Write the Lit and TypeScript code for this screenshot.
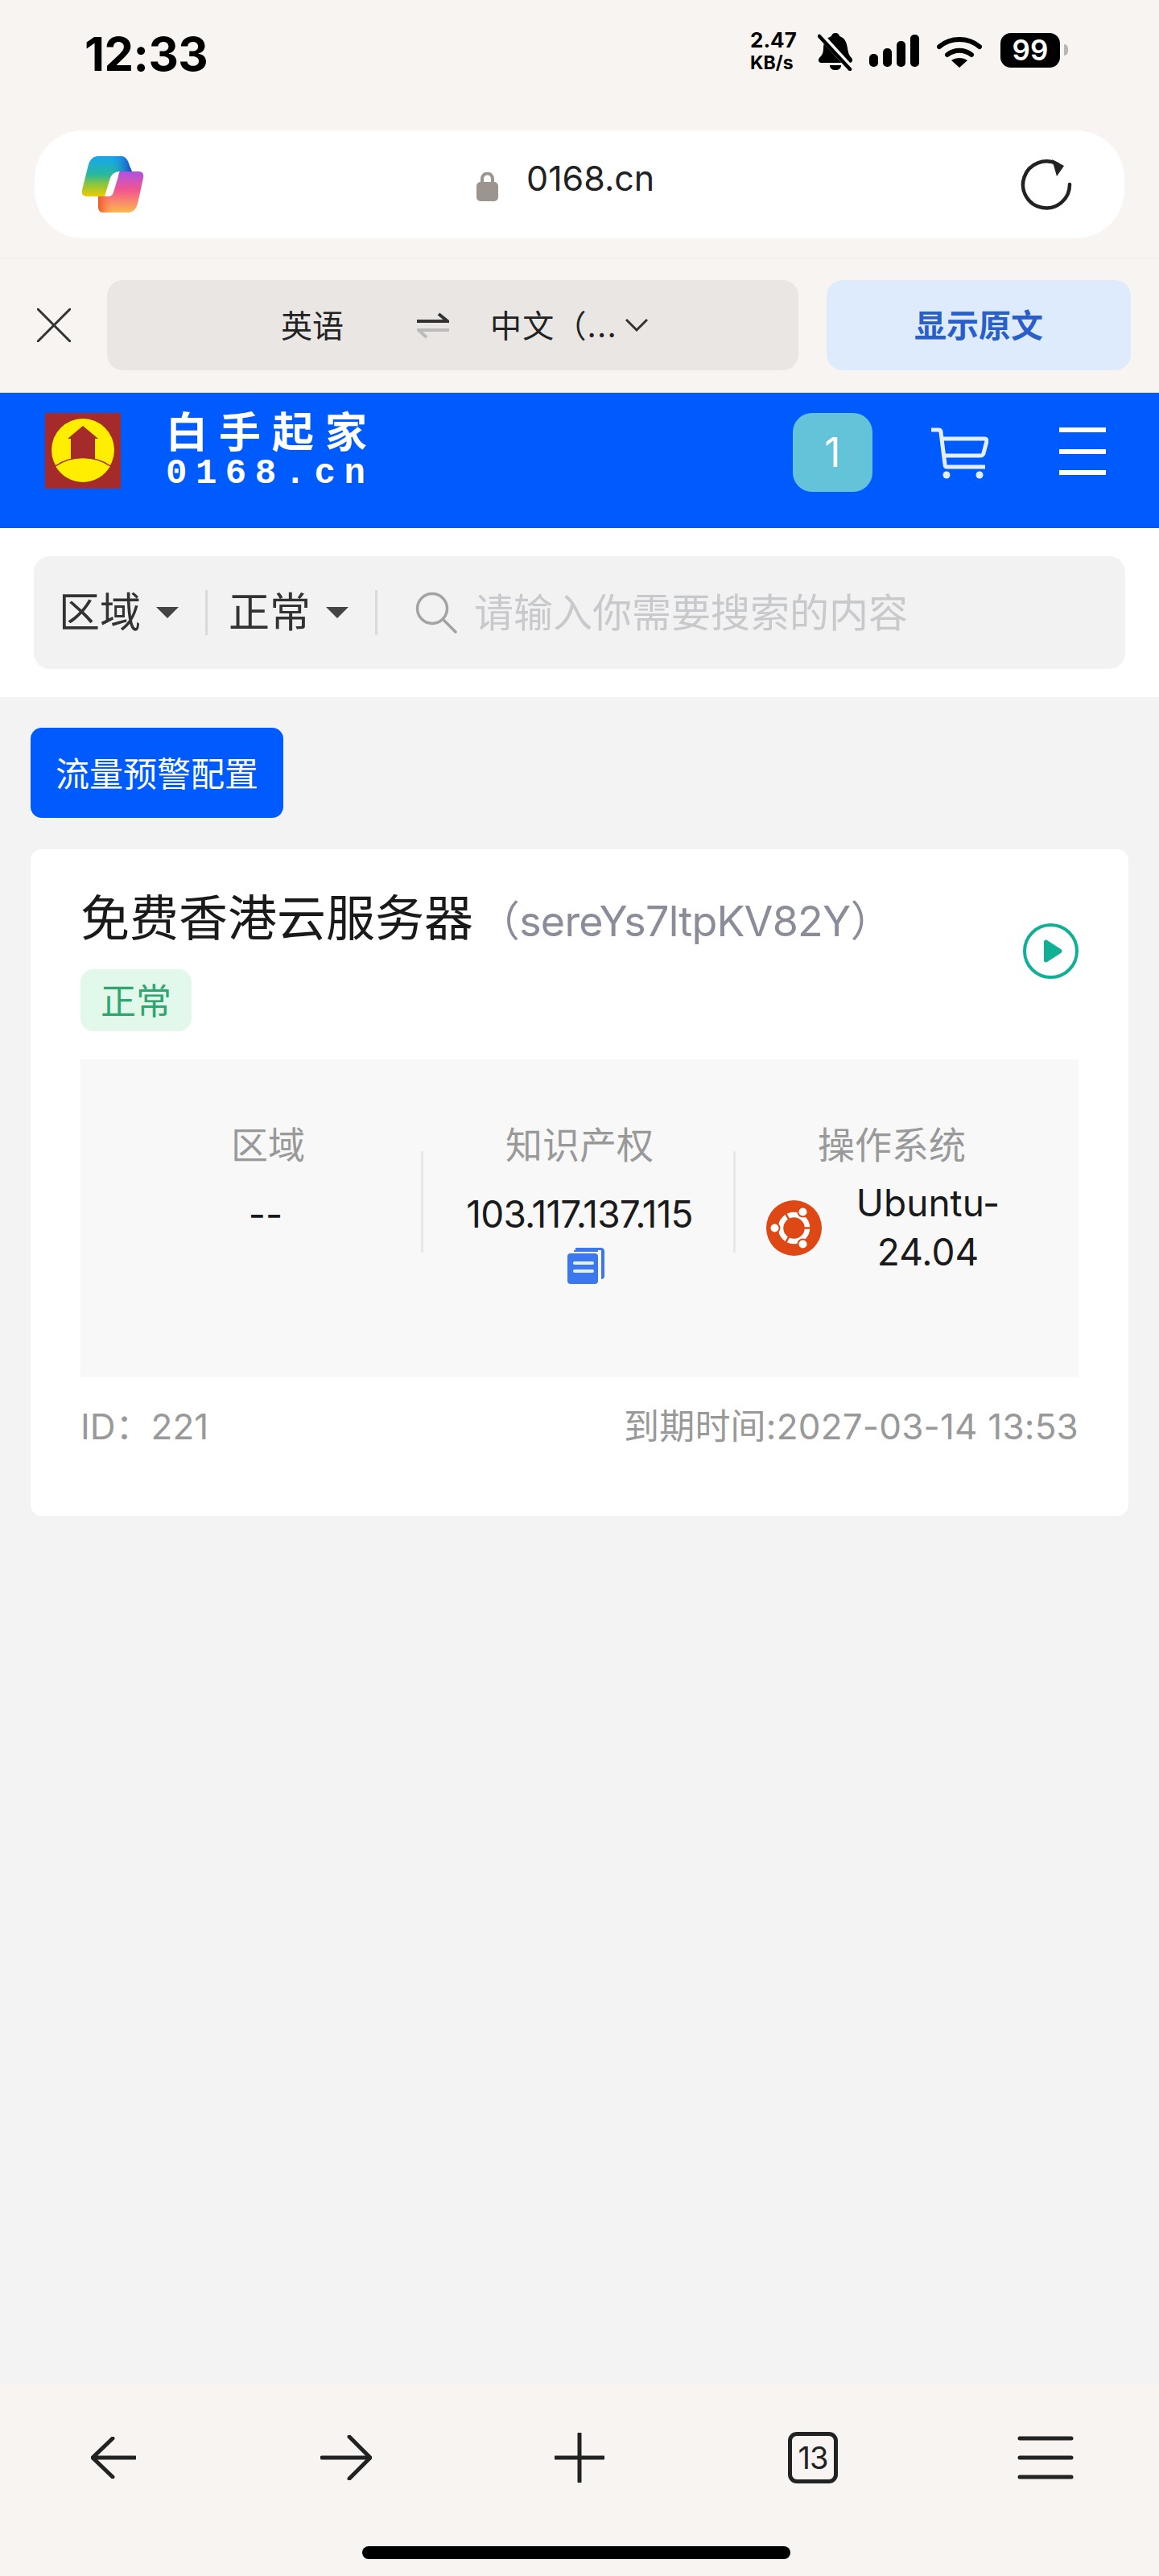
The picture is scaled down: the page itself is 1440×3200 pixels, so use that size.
import { LitElement, html, css } from 'lit';
import { customElement } from 'lit/decorators.js';

@customElement('app-root')
class AppRoot extends LitElement {
  static styles = css`
    :host {
      display: flex;
      flex-direction: column;
      width: 1440px;
      height: 3200px;
      background: #f3f3f3;
      font-family: Inter, 'Noto Sans CJK SC', sans-serif;
      color: #1a1a1a;
    }
    svg {
      display: block;
      flex: none;
    }
    .chrome {
      background: #f7f4f1;
      border-bottom: 1px solid #e2e0de;
    }
    .status {
      height: 162px;
      display: flex;
      align-items: flex-start;
      box-sizing: border-box;
      padding: 36px 0 0 105px;
    }
    .time {
      font-size: 58px;
      line-height: 62px;
      font-weight: 700;
      color: #000;
      letter-spacing: -0.5px;
    }
    .status-right {
      margin-left: auto;
      margin-top: 4px;
      display: flex;
      align-items: flex-start;
      padding-right: 113px;
    }
    .speed {
      width: 72px;
      margin-right: 12px;
      font-weight: 700;
      color: #000;
    }
    .speed div:first-child {
      font-size: 26px;
      line-height: 25px;
      margin-top: -3px;
    }
    .speed div:last-child {
      font-size: 23px;
      line-height: 25px;
      margin-top: 4px;
    }
    .signal {
      margin: 3px 0 0 20px;
    }
    .wifi {
      margin: 4px 0 0 22px;
    }
    .battery {
      width: 74px;
      height: 43px;
      margin-left: 23px;
      border-radius: 13px;
      background: #000;
      color: #fff;
      font-size: 35px;
      line-height: 43px;
      font-weight: 600;
      text-align: center;
      margin-top: 1px;
    }
    .nub {
      width: 5px;
      height: 14px;
      margin: 15px 0 0 5px;
      border-radius: 0 5px 5px 0;
      background: #b8b5b2;
    }
    .address {
      height: 134px;
      margin: 0 43px;
      background: #fff;
      border-radius: 60px;
      display: flex;
      align-items: center;
      padding: 0 65px 0 58px;
    }
    .url {
      margin-left: 413px;
      display: flex;
      align-items: center;
      font-size: 43px;
      color: #222;
    }
    .url svg {
      margin-right: 35px;
      margin-top: 6px;
    }
    .url span {
      margin-bottom: 16px;
    }
    .address .reload {
      margin-left: auto;
    }
    .translate {
      border-top: 1px solid #efecea;
      margin-top: 24px;
      display: flex;
      align-items: flex-start;
      padding: 27px 35px 27px 46px;
    }
    .translate .close {
      margin: 35px 45px 0 0;
    }
    .lang {
      width: 859px;
      height: 112px;
      border-radius: 20px;
      background: #e9e6e3;
      display: flex;
      align-items: center;
      box-sizing: border-box;
      padding-left: 216px;
      font-size: 39px;
      color: #222;
    }
    .lang span {
      margin-bottom: 4px;
    }
    .lang .target {
      letter-spacing: 1.2px;
    }
    .lang .swap {
      margin: 0 51px 0 91px;
    }
    .lang .chev {
      margin-left: 10px;
    }
    .original {
      margin-left: 35px;
      width: 378px;
      height: 112px;
      border-radius: 20px;
      background: #deebfd;
      color: #2a5fc9;
      font-size: 40px;
      font-weight: 700;
      display: flex;
      align-items: center;
      justify-content: center;
      padding-bottom: 4px;
      box-sizing: border-box;
    }
    .topbar {
      height: 168px;
      background: #005bff;
      display: flex;
      align-items: flex-start;
      color: #fff;
      padding: 25px 66px 0 56px;
      box-sizing: border-box;
    }
    .brand {
      margin-left: 56px;
    }
    .brand-cn {
      font-size: 52px;
      line-height: 50px;
      font-weight: 700;
      letter-spacing: 14px;
    }
    .brand-en {
      margin-top: 3px;
      font-family: 'Liberation Mono', monospace;
      font-size: 44px;
      line-height: 44px;
      font-weight: 700;
      letter-spacing: 10.5px;
    }
    .count {
      margin-left: auto;
      width: 99px;
      height: 98px;
      border-radius: 24px;
      background: #62c3d9;
      font-size: 50px;
      font-weight: 400;
      display: flex;
      align-items: center;
      justify-content: center;
    }
    .cart {
      margin: 18px 0 0 73px;
    }
    .burger {
      margin: 18px 0 0 88px;
    }
    .search-wrap {
      background: #fff;
      padding: 35px 42px;
    }
    .search {
      height: 140px;
      border-radius: 20px;
      background: #f2f2f2;
      display: flex;
      align-items: center;
      padding-left: 31px;
      font-size: 51px;
      color: #333;
    }
    .filter {
      display: flex;
      align-items: center;
    }
    .filter span {
      margin-bottom: 8px;
    }
    .caret {
      width: 0;
      height: 0;
      margin: 0 33px 0 19px;
      border-left: 14px solid transparent;
      border-right: 14px solid transparent;
      border-top: 14px solid #444;
    }
    .sep {
      width: 3px;
      height: 56px;
      background: #dadada;
      margin-right: 26px;
    }
    .search svg {
      margin: 0 21px 0 21px;
    }
    .placeholder {
      font-size: 49px;
      color: #c8c9cc;
      margin-bottom: 8px;
    }
    main {
      flex: 1;
      padding: 38px;
    }
    .config {
      width: 314px;
      height: 112px;
      border-radius: 14px;
      background: #005bff;
      color: #fff;
      font-size: 42px;
      display: flex;
      align-items: center;
      justify-content: center;
      padding-bottom: 4px;
      box-sizing: border-box;
    }
    .card {
      margin-top: 39px;
      background: #fff;
      border-radius: 14px;
      padding: 46px 62px 89px;
    }
    .head {
      display: flex;
      align-items: flex-start;
      justify-content: space-between;
    }
    .title {
      font-size: 61px;
      line-height: 80px;
      white-space: nowrap;
    }
    .title span {
      font-size: 52px;
      letter-spacing: -0.8px;
      color: #8a8d99;
      margin-left: 6px;
    }
    .tag {
      margin-top: 19px;
      width: 138px;
      height: 77px;
      border-radius: 16px;
      background: #e1f8ea;
      color: #2fa66f;
      font-size: 44px;
      display: flex;
      align-items: center;
      justify-content: center;
      padding-bottom: 4px;
      box-sizing: border-box;
    }
    .play {
      margin-top: 46px;
    }
    .panel {
      margin-top: 35px;
      height: 395px;
      background: #f8f8f8;
      display: grid;
      grid-template-columns: 386px 388px 388px;
      padding-left: 40px;
      padding-top: 84px;
      box-sizing: border-box;
    }
    .col {
      position: relative;
      text-align: center;
    }
    .col + .col::before {
      content: '';
      position: absolute;
      left: -3px;
      top: 30px;
      width: 3px;
      height: 126px;
      background: #e8e8e8;
    }
    .label {
      font-size: 46px;
      line-height: 44px;
      color: #999;
    }
    .value {
      font-size: 46px;
      line-height: 60px;
      margin-top: 34px;
      color: #1a1a1a;
      white-space: nowrap;
    }
    .value.ip {
      letter-spacing: -0.8px;
    }
    .value.empty {
      margin-right: 6px;
    }
    .copy {
      display: flex;
      justify-content: center;
      margin: 12px 0 0 16px;
    }
    .os {
      display: flex;
      align-items: center;
      margin-top: 20px;
      padding-left: 38px;
      font-size: 46px;
      line-height: 61px;
    }
    .os-name {
      width: 180px;
      margin-left: 42px;
      text-align: center;
      color: #1a1a1a;
    }
    .foot {
      margin-top: 39px;
      display: flex;
      justify-content: space-between;
      font-size: 44px;
      line-height: 44px;
      color: #999;
    }
    .foot .expire {
      letter-spacing: 0.2px;
    }
    .nav {
      height: 238px;
      background: #f7f4f1;
      box-sizing: border-box;
      padding-top: 58px;
    }
    .nav-row {
      display: flex;
      align-items: center;
      padding-left: 113px;
      height: 66px;
    }
    .forward {
      margin-left: 229px;
    }
    .plus {
      margin-left: 227px;
    }
    .tabs {
      width: 62px;
      height: 64px;
      margin-left: 228px;
      box-sizing: border-box;
      border: 5px solid #222;
      border-radius: 11px;
      font-size: 38px;
      color: #222;
      display: flex;
      align-items: center;
      justify-content: center;
      letter-spacing: -1px;
    }
    .menu {
      margin-left: 223px;
    }
    .home {
      width: 532px;
      height: 16px;
      border-radius: 8px;
      background: #000;
      margin: 77px 0 0 450px;
    }
  `;

  render() {
    return html`
      <div class="chrome">
        <div class="status">
          <div class="time">12:33</div>
          <div class="status-right">
            <div class="speed"><div>2.47</div><div>KB/s</div></div>
            <svg width="44" height="48" viewBox="0 0 44 48">
              <path d="M22 1c3 0 5 2 5 4 7 2 9 8 10 15 1 6 2 9 5 12 2 2 1 6-2 6H4c-3 0-4-4-2-6 3-3 5-6 5-12 0-8 4-13 10-15 0-2 2-4 5-4z" fill="#000"/>
              <path d="M15 41h14c0 4-3 6-7 6s-7-2-7-6z" fill="#000"/>
              <path d="M2 2l40 44" stroke="#f7f4f1" stroke-width="8"/>
              <path d="M2 5l38 41" stroke="#000" stroke-width="4.5" stroke-linecap="round"/>
            </svg>
            <svg class="signal" width="62" height="40" viewBox="0 0 62 40">
              <rect x="0" y="24" width="11" height="16" rx="5" fill="#000"/>
              <rect x="17" y="17" width="11" height="23" rx="5" fill="#000"/>
              <rect x="34" y="8" width="11" height="32" rx="5" fill="#000"/>
              <rect x="51" y="0" width="11" height="40" rx="5" fill="#000"/>
            </svg>
            <svg class="wifi" width="56" height="40" viewBox="0 0 56 40">
              <path d="M3 14C17 2 39 2 53 14" fill="none" stroke="#000" stroke-width="6" stroke-linecap="round"/>
              <path d="M13 24c9-7 21-7 30 0" fill="none" stroke="#000" stroke-width="6" stroke-linecap="round"/>
              <path d="M28 40L18 31c6-4 14-4 20 0z" fill="#000"/>
            </svg>
            <div class="battery">99</div>
            <div class="nub"></div>
          </div>
        </div>
        <div class="address">
          <svg width="78" height="72" viewBox="0 0 78 72">
            <defs>
              <linearGradient id="cpl" x1="0" y1="0" x2="0" y2="1">
                <stop offset="0" stop-color="#17a5f0"/>
                <stop offset=".45" stop-color="#27b8a0"/>
                <stop offset=".7" stop-color="#8cc63f"/>
                <stop offset="1" stop-color="#eccb00"/>
              </linearGradient>
              <linearGradient id="cpb" x1="0" y1="0" x2="1" y2="0">
                <stop offset="0" stop-color="#1d8fe6" stop-opacity="0"/>
                <stop offset="1" stop-color="#1a45c4"/>
              </linearGradient>
              <linearGradient id="cpr" x1="0" y1="0" x2="0" y2="1">
                <stop offset="0" stop-color="#ac52e4"/>
                <stop offset=".45" stop-color="#f2558f"/>
                <stop offset="1" stop-color="#ffb84d"/>
              </linearGradient>
              <linearGradient id="cpo" x1="0" y1="0" x2="1" y2="0">
                <stop offset="0" stop-color="#f0562a"/>
                <stop offset="1" stop-color="#f98a48" stop-opacity="0"/>
              </linearGradient>
            </defs>
            <path d="M21 1h28c7 0 9 6 11 12l3 7H48c-6 0-10 3-12 8l-7 23H7c-5 0-7-3-6-8L9 11c2-6 6-10 12-10z" fill="url(#cpl)"/>
            <path d="M38 1h11c7 0 9 6 11 12l3 7H48c-3 0-5 1-7 2z" fill="url(#cpb)"/>
            <path d="M48 20h23c5 0 7 3 6 8l-7 32c-2 7-6 11-12 11H27c-4 0-6-3-6-8V51h12c4 0 6-2 7-5l6-20c0-2 1-5 2-6z" fill="url(#cpr)"/>
            <path d="M21 51h14l4 20H27c-4 0-6-3-6-8z" fill="url(#cpo)"/>
          </svg>
          <div class="url">
            <svg width="27" height="36" viewBox="0 0 27 36">
              <path d="M7 14V8a6.500 6.500 0 0 1 13 0v6" fill="none" stroke="#9c958f" stroke-width="4"/>
              <rect x="0" y="12" width="27" height="24" rx="5" fill="#9c958f"/>
            </svg>
            <span>0168.cn</span>
          </div>
          <svg class="reload" width="64" height="64" viewBox="0 0 64 64">
            <path d="M46 7A29 29 0 1 0 61 32" fill="none" stroke="#222" stroke-width="4.500" stroke-linecap="round"/>
            <path d="M39 1l15 8-9 13z" fill="#222"/>
          </svg>
        </div>
        <div class="translate">
          <svg class="close" width="42" height="42" viewBox="0 0 42 42">
            <path d="M1 1l40 40M41 1L1 41" stroke="#333" stroke-width="3" stroke-linecap="round"/>
          </svg>
          <div class="lang">
            <span>英语</span>
            <svg class="swap" width="40" height="34" viewBox="0 0 40 34">
              <path d="M0 12h38L27 3" fill="none" stroke="#333" stroke-width="4"/>
              <path d="M40 23H2l10 9" fill="none" stroke="#bdbbb9" stroke-width="4"/>
            </svg>
            <span class="target">中文（...</span>
            <svg class="chev" width="28" height="18" viewBox="0 0 28 18">
              <path d="M1 2l13 13L27 2" fill="none" stroke="#333" stroke-width="3"/>
            </svg>
          </div>
          <div class="original">显示原文</div>
        </div>
      </div>
      <div class="topbar">
        <svg width="94" height="94" viewBox="0 0 94 94">
          <rect width="94" height="94" fill="#a52a2a"/>
          <circle cx="47" cy="46" r="39" fill="#ffee00"/>
          <path d="M47 16L66 32H62V62H32V32H28z" fill="#a52a2a"/>
          <path d="M13 66C33 52 61 52 81 66A39 39 0 0 1 13 66z" fill="#ffee00"/>
          <path d="M13 66C33 52 61 52 81 66" fill="none" stroke="#a52a2a" stroke-width="1.500"/>
        </svg>
        <div class="brand">
          <div class="brand-cn">白手起家</div>
          <div class="brand-en">0168.cn</div>
        </div>
        <div class="count">1</div>
        <svg class="cart" width="71" height="64" viewBox="0 0 71 64">
          <path d="M0 3h9c2 0 3 1 3 3l5 40c0 2 1 3 3 3h47" fill="none" stroke="#e4eeff" stroke-width="5"/>
          <path d="M12 14h54c2 0 3 1 3 3l-4 15c0 2-2 3-4 3H14" fill="none" stroke="#e4eeff" stroke-width="5"/>
          <circle cx="19" cy="59" r="4.500" fill="#e4eeff"/>
          <circle cx="60" cy="59" r="4.500" fill="#e4eeff"/>
        </svg>
        <svg class="burger" width="58" height="60" viewBox="0 0 58 60">
          <rect y="0" width="58" height="6" fill="#fff"/>
          <rect y="27" width="58" height="6" fill="#fff"/>
          <rect y="53" width="58" height="6" fill="#fff"/>
        </svg>
      </div>
      <div class="search-wrap">
        <div class="search">
          <div class="filter"><span>区域</span><i class="caret"></i><i class="sep"></i></div>
          <div class="filter"><span>正常</span><i class="caret"></i><i class="sep"></i></div>
          <svg width="52" height="52" viewBox="0 0 52 52">
            <circle cx="21" cy="21" r="18.500" fill="none" stroke="#a3a3a3" stroke-width="3.500"/>
            <path d="M34 34l16 16" stroke="#a3a3a3" stroke-width="3.500" stroke-linecap="round"/>
          </svg>
          <span class="placeholder">请输入你需要搜索的内容</span>
        </div>
      </div>
      <main>
        <div class="config">流量预警配置</div>
        <div class="card">
          <div class="head">
            <div>
              <div class="title">免费香港云服务器<span>（sereYs7ltpKV82Y）</span></div>
              <div class="tag">正常</div>
            </div>
            <svg class="play" width="69" height="69" viewBox="0 0 69 69">
              <circle cx="34.500" cy="34.500" r="32.500" fill="none" stroke="#10b097" stroke-width="4"/>
              <path d="M26 23c0-2 2-3 4-2l17 11c2 1 2 4 0 5L30 48c-2 1-4 0-4-2z" fill="#10b097"/>
            </svg>
          </div>
          <div class="panel">
            <div class="col">
              <div class="label">区域</div>
              <div class="value empty">--</div>
            </div>
            <div class="col">
              <div class="label">知识产权</div>
              <div class="value ip">103.117.137.115</div>
              <div class="copy">
                <svg width="46" height="45" viewBox="0 0 46 45">
                  <path d="M10 0h32c2 0 4 2 4 4v32c0 2-2 3-4 3V3H10z" fill="#3b78ee"/>
                  <path d="M8 3h30v2H8z" fill="#3b78ee"/>
                  <rect x="0" y="7" width="38" height="38" rx="4" fill="#3b78ee"/>
                  <rect x="7" y="17" width="26" height="4" rx="2" fill="#e6eefc"/>
                  <rect x="7" y="27" width="26" height="4" rx="2" fill="#e6eefc"/>
                </svg>
              </div>
            </div>
            <div class="col">
              <div class="label">操作系统</div>
              <div class="os">
                <svg width="69" height="69" viewBox="-34.500 -34.500 69 69">
                  <circle r="34.500" fill="#dd4814"/>
                  <circle r="16.500" fill="none" stroke="#fff" stroke-width="6.500"/>
                  <path d="M12 0h11M-6 10.400l-5.500 9.500M-6-10.400l-5.500-9.500" stroke="#dd4814" stroke-width="2.500"/>
                  <circle cx="11" cy="-20" r="7" fill="#dd4814"/>
                  <circle cx="-24" cy="0" r="7" fill="#dd4814"/>
                  <circle cx="11" cy="20" r="7" fill="#dd4814"/>
                  <circle cx="11" cy="-20" r="5" fill="#fff"/>
                  <circle cx="-24" cy="0" r="5" fill="#fff"/>
                  <circle cx="11" cy="20" r="5" fill="#fff"/>
                </svg>
                <div class="os-name">Ubuntu-24.04</div>
              </div>
            </div>
          </div>
          <div class="foot">
            <span>ID：221</span>
            <span class="expire">到期时间:2027-03-14 13:53</span>
          </div>
        </div>
      </main>
      <div class="nav">
        <div class="nav-row">
          <svg width="56" height="52" viewBox="0 0 56 52">
            <path d="M27 2L2 26l25 24M3 26h52" fill="none" stroke="#222" stroke-width="5" stroke-linecap="round" stroke-linejoin="round"/>
          </svg>
          <svg class="forward" width="64" height="56" viewBox="0 0 64 56">
            <path d="M36 2l26 26-26 26M2 28h58" fill="none" stroke="#222" stroke-width="5" stroke-linecap="round" stroke-linejoin="round"/>
          </svg>
          <svg class="plus" width="62" height="62" viewBox="0 0 62 62">
            <path d="M31 1v60M1 31h60" stroke="#222" stroke-width="5" stroke-linecap="round"/>
          </svg>
          <div class="tabs">13</div>
          <svg class="menu" width="70" height="54" viewBox="0 0 70 54">
            <path d="M3 3h64M3 27h64M3 51h64" stroke="#222" stroke-width="5" stroke-linecap="round"/>
          </svg>
        </div>
        <div class="home"></div>
      </div>
    `;
  }
}
